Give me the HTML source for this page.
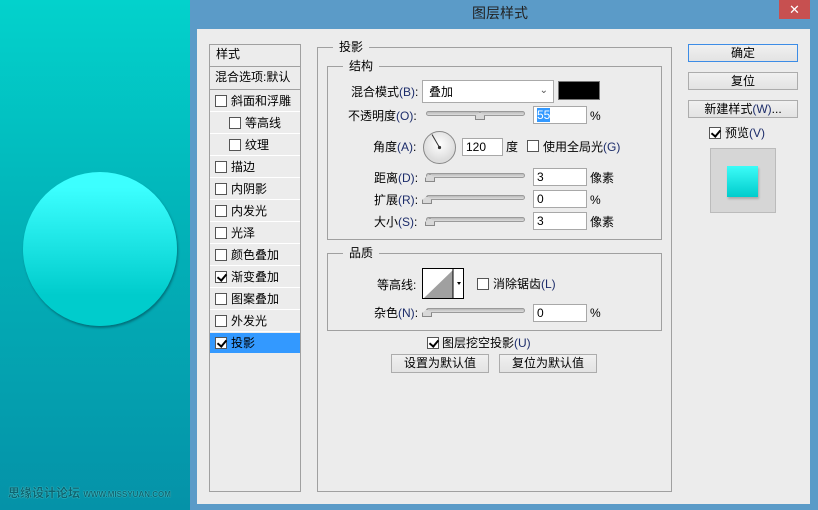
<!DOCTYPE html>
<html><head><meta charset="utf-8"><style>
*{margin:0;padding:0;box-sizing:border-box}
body{width:818px;height:510px;overflow:hidden;position:relative;font-family:"Liberation Sans","Noto Sans CJK SC",sans-serif;font-size:12px;color:#000;background:#5b9bc8}
.a{position:absolute}
.t{position:absolute;white-space:nowrap;line-height:14px}
.u{color:#1c2c6a}
.cb{position:absolute;width:12px;height:12px;border:1px solid #555;background:#fff}
.ck::after{content:"";position:absolute;left:3px;top:0px;width:4px;height:7px;border:solid #000;border-width:0 2px 2px 0;transform:rotate(40deg)}
.in{position:absolute;background:#fff;border:1px solid #a8a8a8;height:18px;padding-left:3px;line-height:16px}
.sl{position:absolute;height:5px;border:1px solid #9a9a9a;border-radius:3px;background:linear-gradient(#bbb,#ddd)}
.th{position:absolute;width:10px;height:8px;background:#d8d8d8;border:1px solid #888;clip-path:polygon(50% 0,100% 50%,100% 100%,0 100%,0 50%)}
.btn{position:absolute;border:1px solid #acacac;background:linear-gradient(#f0f0f0,#e3e3e3);text-align:center;line-height:16px}
.grp{position:absolute;border:1px solid #a0a0a0}
.gt{position:absolute;background:#ececec;padding:0 6px;line-height:14px}
.row{position:absolute;left:0;width:90px;height:22px;border-bottom:1px solid #fff}
</style></head><body>
<div class="a" style="left:0;top:0;width:190px;height:510px;background:linear-gradient(#03d2cc,#02b2b8 45%,#0592a8)"></div>
<div class="a" style="left:23px;top:172px;width:154px;height:154px;border-radius:50%;background:linear-gradient(#3cffff 10%,#00cccc 80%);box-shadow:1px 2px 2px rgba(0,60,70,.5)"></div>
<div class="t" style="left:8px;top:486px;color:#0e6470;font-size:12px;font-weight:bold;text-shadow:0 0 1px #8ff">思缘设计论坛 <span style="font-size:8px">WWW.MISSYUAN.COM</span></div>

<div class="t" style="left:472px;top:6px;font-size:14px;color:#222">图层样式</div>
<div class="a" style="left:779px;top:0;width:31px;height:19px;background:#c75050;color:#fff;text-align:center;font-size:13px;line-height:19px">✕</div>
<div class="a" style="left:197px;top:29px;width:613px;height:475px;background:#ececec"></div>

<div class="a" style="left:209px;top:44px;width:92px;height:448px;border:1px solid #a0a0a0;background:#ececec">
 <div class="row" style="top:0;height:22px;border-bottom:1px solid #a0a0a0"><span class="t" style="left:6px;top:2px">样式</span></div>
 <div class="row" style="top:22px;height:23px;border-bottom:1px solid #a0a0a0"><span class="t" style="left:5px;top:3px">混合选项:默认</span></div>
 <div class="row" style="top:45px"><div class="cb" style="left:5px;top:5px"></div><span class="t" style="left:21px;top:4px">斜面和浮雕</span></div>
 <div class="row" style="top:67px"><div class="cb" style="left:19px;top:5px"></div><span class="t" style="left:35px;top:4px">等高线</span></div>
 <div class="row" style="top:89px"><div class="cb" style="left:19px;top:5px"></div><span class="t" style="left:35px;top:4px">纹理</span></div>
 <div class="row" style="top:111px"><div class="cb" style="left:5px;top:5px"></div><span class="t" style="left:21px;top:4px">描边</span></div>
 <div class="row" style="top:133px"><div class="cb" style="left:5px;top:5px"></div><span class="t" style="left:21px;top:4px">内阴影</span></div>
 <div class="row" style="top:155px"><div class="cb" style="left:5px;top:5px"></div><span class="t" style="left:21px;top:4px">内发光</span></div>
 <div class="row" style="top:177px"><div class="cb" style="left:5px;top:5px"></div><span class="t" style="left:21px;top:4px">光泽</span></div>
 <div class="row" style="top:199px"><div class="cb" style="left:5px;top:5px"></div><span class="t" style="left:21px;top:4px">颜色叠加</span></div>
 <div class="row" style="top:221px"><div class="cb ck" style="left:5px;top:5px"></div><span class="t" style="left:21px;top:4px">渐变叠加</span></div>
 <div class="row" style="top:243px"><div class="cb" style="left:5px;top:5px"></div><span class="t" style="left:21px;top:4px">图案叠加</span></div>
 <div class="row" style="top:265px"><div class="cb" style="left:5px;top:5px"></div><span class="t" style="left:21px;top:4px">外发光</span></div>
 <div class="row" style="top:288px;height:20px;background:#3399ff;border:0"><div class="cb ck" style="left:5px;top:4px"></div><span class="t" style="left:21px;top:3px">投影</span></div>
</div>

<div class="grp" style="left:317px;top:47px;width:355px;height:445px"></div>
<div class="gt" style="left:333px;top:40px">投影</div>
<div class="grp" style="left:327px;top:66px;width:335px;height:174px"></div>
<div class="gt" style="left:343px;top:59px">结构</div>

<div class="t" style="left:351px;top:85px">混合模式<span class="u">(B)</span>:</div>
<div class="a" style="left:422px;top:80px;width:132px;height:23px;background:#fff;border:1px solid #aaa"><span class="t" style="left:6px;top:4px">叠加</span><span class="t" style="right:5px;top:3px;color:#555;font-size:10px">&#8964;</span></div>
<div class="a" style="left:558px;top:81px;width:42px;height:19px;background:#000;border:1px solid #777"></div>

<div class="t" style="left:348px;top:109px">不透明度<span class="u">(O)</span>:</div>
<div class="sl" style="left:426px;top:111px;width:99px"></div><div class="th" style="left:475px;top:112px"></div>
<div class="in" style="left:533px;top:106px;width:54px"><span style="background:#3399ff;color:#fff">55</span></div>
<div class="t" style="left:590px;top:109px">%</div>

<div class="t" style="left:373px;top:140px">角度<span class="u">(A)</span>:</div>
<svg class="a" style="left:422px;top:130px" width="36" height="36"><defs><radialGradient id="g" cx="50%" cy="40%"><stop offset="0" stop-color="#fff"/><stop offset="1" stop-color="#ddd"/></radialGradient></defs><circle cx="17.5" cy="17.5" r="16" fill="url(#g)" stroke="#888"/><line x1="17.5" y1="17.5" x2="10" y2="4.5" stroke="#333" stroke-width="1"/><circle cx="17.5" cy="17.5" r="1.6" fill="#333"/></svg>
<div class="in" style="left:462px;top:138px;width:41px">120</div>
<div class="t" style="left:506px;top:140px">度</div>
<div class="cb" style="left:527px;top:140px"></div>
<div class="t" style="left:543px;top:140px">使用全局光<span class="u">(G)</span></div>

<div class="t" style="left:374px;top:171px">距离<span class="u">(D)</span>:</div>
<div class="sl" style="left:426px;top:173px;width:99px"></div><div class="th" style="left:425px;top:174px"></div>
<div class="in" style="left:533px;top:168px;width:54px">3</div><div class="t" style="left:590px;top:171px">像素</div>
<div class="t" style="left:374px;top:193px">扩展<span class="u">(R)</span>:</div>
<div class="sl" style="left:426px;top:195px;width:99px"></div><div class="th" style="left:422px;top:196px"></div>
<div class="in" style="left:533px;top:190px;width:54px">0</div><div class="t" style="left:590px;top:193px">%</div>
<div class="t" style="left:374px;top:215px">大小<span class="u">(S)</span>:</div>
<div class="sl" style="left:426px;top:217px;width:99px"></div><div class="th" style="left:425px;top:218px"></div>
<div class="in" style="left:533px;top:212px;width:54px">3</div><div class="t" style="left:590px;top:215px">像素</div>

<div class="grp" style="left:327px;top:253px;width:335px;height:78px"></div>
<div class="gt" style="left:343px;top:246px">品质</div>
<div class="t" style="left:377px;top:278px">等高线:</div>
<div class="a" style="left:422px;top:268px;width:42px;height:31px;border:1px solid #000;background:#fff">
<svg width="40" height="29" style="position:absolute;left:0;top:0"><polygon points="1,29 30,1 30,29" fill="#a0a0a0"/><line x1="30" y1="0" x2="30" y2="29" stroke="#000"/><polygon points="34,13 38,13 36,16" fill="#000"/></svg></div>
<div class="cb" style="left:477px;top:278px"></div>
<div class="t" style="left:493px;top:277px">消除锯齿<span class="u">(L)</span></div>
<div class="t" style="left:374px;top:306px">杂色<span class="u">(N)</span>:</div>
<div class="sl" style="left:426px;top:308px;width:99px"></div><div class="th" style="left:422px;top:309px"></div>
<div class="in" style="left:533px;top:304px;width:54px">0</div><div class="t" style="left:590px;top:306px">%</div>

<div class="cb ck" style="left:427px;top:337px"></div>
<div class="t" style="left:442px;top:336px">图层挖空投影<span class="u">(U)</span></div>
<div class="btn" style="left:391px;top:354px;width:98px;height:19px">设置为默认值</div>
<div class="btn" style="left:499px;top:354px;width:98px;height:19px">复位为默认值</div>

<div class="btn" style="left:688px;top:44px;width:110px;height:18px;border-color:#3c8ce6">确定</div>
<div class="btn" style="left:688px;top:72px;width:110px;height:18px">复位</div>
<div class="btn" style="left:688px;top:100px;width:110px;height:18px">新建样式<span class="u">(W)</span>...</div>
<div class="cb ck" style="left:709px;top:127px"></div>
<div class="t" style="left:725px;top:126px">预览<span class="u">(V)</span></div>
<div class="a" style="left:710px;top:148px;width:66px;height:65px;background:#d6d6d6;border:1px solid #bbb"></div>
<div class="a" style="left:727px;top:166px;width:31px;height:31px;background:linear-gradient(#3cfcf8,#00cccc);box-shadow:1px 2px 2px rgba(0,0,0,.2)"></div>
</body></html>
